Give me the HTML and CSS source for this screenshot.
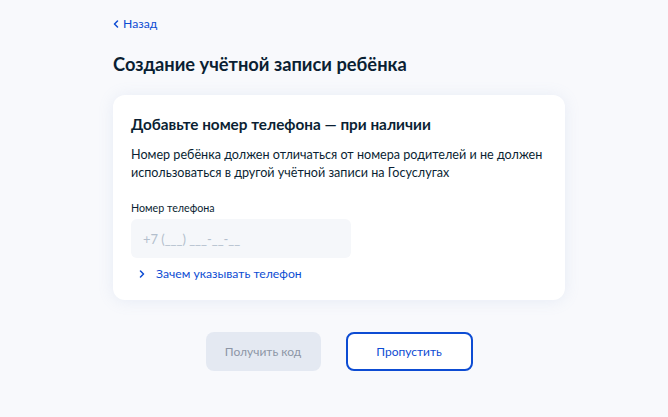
FILE: index.html
```html
<!DOCTYPE html>
<html lang="ru">
<head>
<meta charset="utf-8">
<link rel="stylesheet" href="styles.css">
</head>
<body>
<main class="page">
  <a class="back" href="#">
    <svg class="back-icon" width="8" height="8" viewBox="0 0 8 8"><path d="M5.5 1 2.5 4l3 3" fill="none" stroke="#0d4cd3" stroke-width="1.5" stroke-linecap="round" stroke-linejoin="round"/></svg>
    <span>Назад</span>
  </a>
  <h1 class="title">Создание учётной записи ребёнка</h1>
  <section class="card">
    <h2 class="card-title">Добавьте номер телефона — при наличии</h2>
    <p class="card-text">Номер ребёнка должен отличаться от номера родителей и не должен использоваться в другой учётной записи на Госуслугах</p>
    <label class="label" for="phone">Номер телефона</label>
    <input class="input" id="phone" type="text" placeholder="+7 (___) ___-__-__">
    <a class="why" href="#">
      <svg class="why-icon" width="8" height="8" viewBox="0 0 8 8"><path d="M2.5 1l3 3-3 3" fill="none" stroke="#0d4cd3" stroke-width="1.5" stroke-linecap="round" stroke-linejoin="round"/></svg>
      <span>Зачем указывать телефон</span>
    </a>
  </section>
  <div class="actions">
    <button class="btn btn-disabled" type="button">Получить код</button>
    <button class="btn btn-outline" type="button">Пропустить</button>
  </div>
</main>
</body>
</html>
```

FILE: styles.css
```css
html, body {
  margin: 0;
  padding: 0;
}
body {
  background: #f8f9fc;
  font-family: Lato, "Noto Sans", sans-serif;
  color: #0b1f33;
  width: 668px;
  height: 417px;
  overflow: hidden;
}
.page {
  width: 452px;
  margin-left: 113px;
  padding-top: 15px;
  display: flex;
  flex-direction: column;
}
.back {
  display: flex;
  align-items: center;
  gap: 3px;
  color: #0d4cd3;
  text-decoration: none;
  font-size: 12.2px;
  line-height: 18px;
  margin-left: -1px;
}
.title {
  margin: 19px 0 0;
  font-size: 18.3px;
  line-height: 24px;
  font-weight: 700;
}
.card {
  margin-top: 19px;
  background: #fff;
  border-radius: 12px;
  box-shadow: 0 1px 16px rgba(131, 156, 204, 0.14);
  padding: 18px 18px 17px;
  display: flex;
  flex-direction: column;
  align-items: flex-start;
}
.card-title {
  margin: 0;
  font-size: 15.3px;
  line-height: 22px;
  font-weight: 700;
}
.card-text {
  margin: 11px 0 0;
  font-size: 12.6px;
  line-height: 18px;
}
.label {
  margin-top: 19px;
  font-size: 10.7px;
  line-height: 14px;
}
.input {
  margin-top: 4px;
  width: 220px;
  height: 39px;
  box-sizing: border-box;
  border: none;
  border-radius: 6px;
  background: #f5f7fa;
  padding: 0 12px;
  font-family: inherit;
  font-size: 12.9px;
  color: #0b1f33;
  outline: none;
}
.input::placeholder {
  color: #b3bfcd;
}
.why {
  margin-top: 7px;
  margin-left: 7px;
  display: flex;
  align-items: center;
  gap: 10px;
  color: #0d4cd3;
  text-decoration: none;
  font-size: 12.2px;
  line-height: 18px;
}
.actions {
  margin-top: 32px;
  display: flex;
  justify-content: center;
  gap: 25px;
}
.btn {
  height: 39px;
  border-radius: 8px;
  font-family: inherit;
  font-size: 12px;
  box-sizing: border-box;
}
.btn-disabled {
  width: 115px;
  border: none;
  background: #e4e9f2;
  color: #8d96a6;
}
.btn-outline {
  width: 127px;
  background: #fff;
  border: 2px solid #0d4cd3;
  color: #0d4cd3;
}
```
